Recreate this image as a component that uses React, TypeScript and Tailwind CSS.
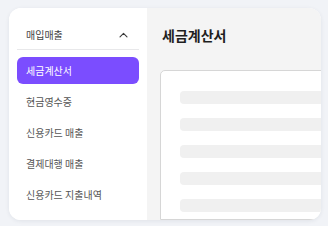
export default function App() {
  const items = ["세금계산서", "현금영수증", "신용카드 매출", "결제대행 매출", "신용카드 지출내역"]
  const active = 0

  return (
    <div className="w-[328px] h-[226px] bg-[#f1f3f7] pt-[8px] pl-[9px] pr-[7px] pb-[6px] font-['Noto_Sans_CJK_KR',sans-serif]">
      <div className="flex h-full w-full overflow-hidden rounded-[12px] bg-white shadow-[0_1px_4px_rgba(30,40,70,0.08)]">
        {/* sidebar */}
        <div className="w-[138px] shrink-0 bg-white px-[8px] pt-[12px]">
          <div className="flex h-[30px] items-center justify-between border-b border-[#e8e8ea] pl-[9px] pr-[11px]">
            <span className="text-[10px] text-[#444]">매입매출</span>
            <svg width="9" height="6" viewBox="0 0 9 6" fill="none">
              <path d="M1 4.8L4.5 1.3L8 4.8" stroke="#3a3a3a" strokeWidth="1.1" strokeLinecap="round" strokeLinejoin="round" />
            </svg>
          </div>
          <div className="mt-[7px] flex flex-col gap-[4px]">
            {items.map((label, i) => (
              <div
                key={label}
                className={
                  i === active
                    ? "flex h-[27px] items-center rounded-[6px] bg-[#7b4dff] pl-[9px] text-[10px] text-white"
                    : "flex h-[27px] items-center rounded-[6px] pl-[9px] text-[10px] text-[#555]"
                }
              >
                {label}
              </div>
            ))}
          </div>
        </div>

        {/* main */}
        <div className="flex min-w-0 flex-1 flex-col overflow-hidden bg-[#f4f4f4] pl-[13px] pt-[10px]">
          <div className="h-[34px] pl-[2px] text-[14px] font-bold leading-[34px] text-[#1f1f1f]">세금계산서</div>
          <div className="mt-[18px] w-[190px] shrink-0 flex-1 rounded-tl-[5px] border border-[#d6d6d6] bg-white pl-[19px] pt-[20px]">
            <div className="flex flex-col gap-[14px]">
              <div className="h-[13px] rounded-[4px] bg-[#f0f0f0]" />
              <div className="h-[13px] rounded-[4px] bg-[#f0f0f0]" />
              <div className="h-[13px] rounded-[4px] bg-[#f0f0f0]" />
              <div className="h-[13px] rounded-[4px] bg-[#f0f0f0]" />
              <div className="h-[13px] rounded-[4px] bg-[#f0f0f0]" />
            </div>
          </div>
        </div>
      </div>
    </div>
  )
}
